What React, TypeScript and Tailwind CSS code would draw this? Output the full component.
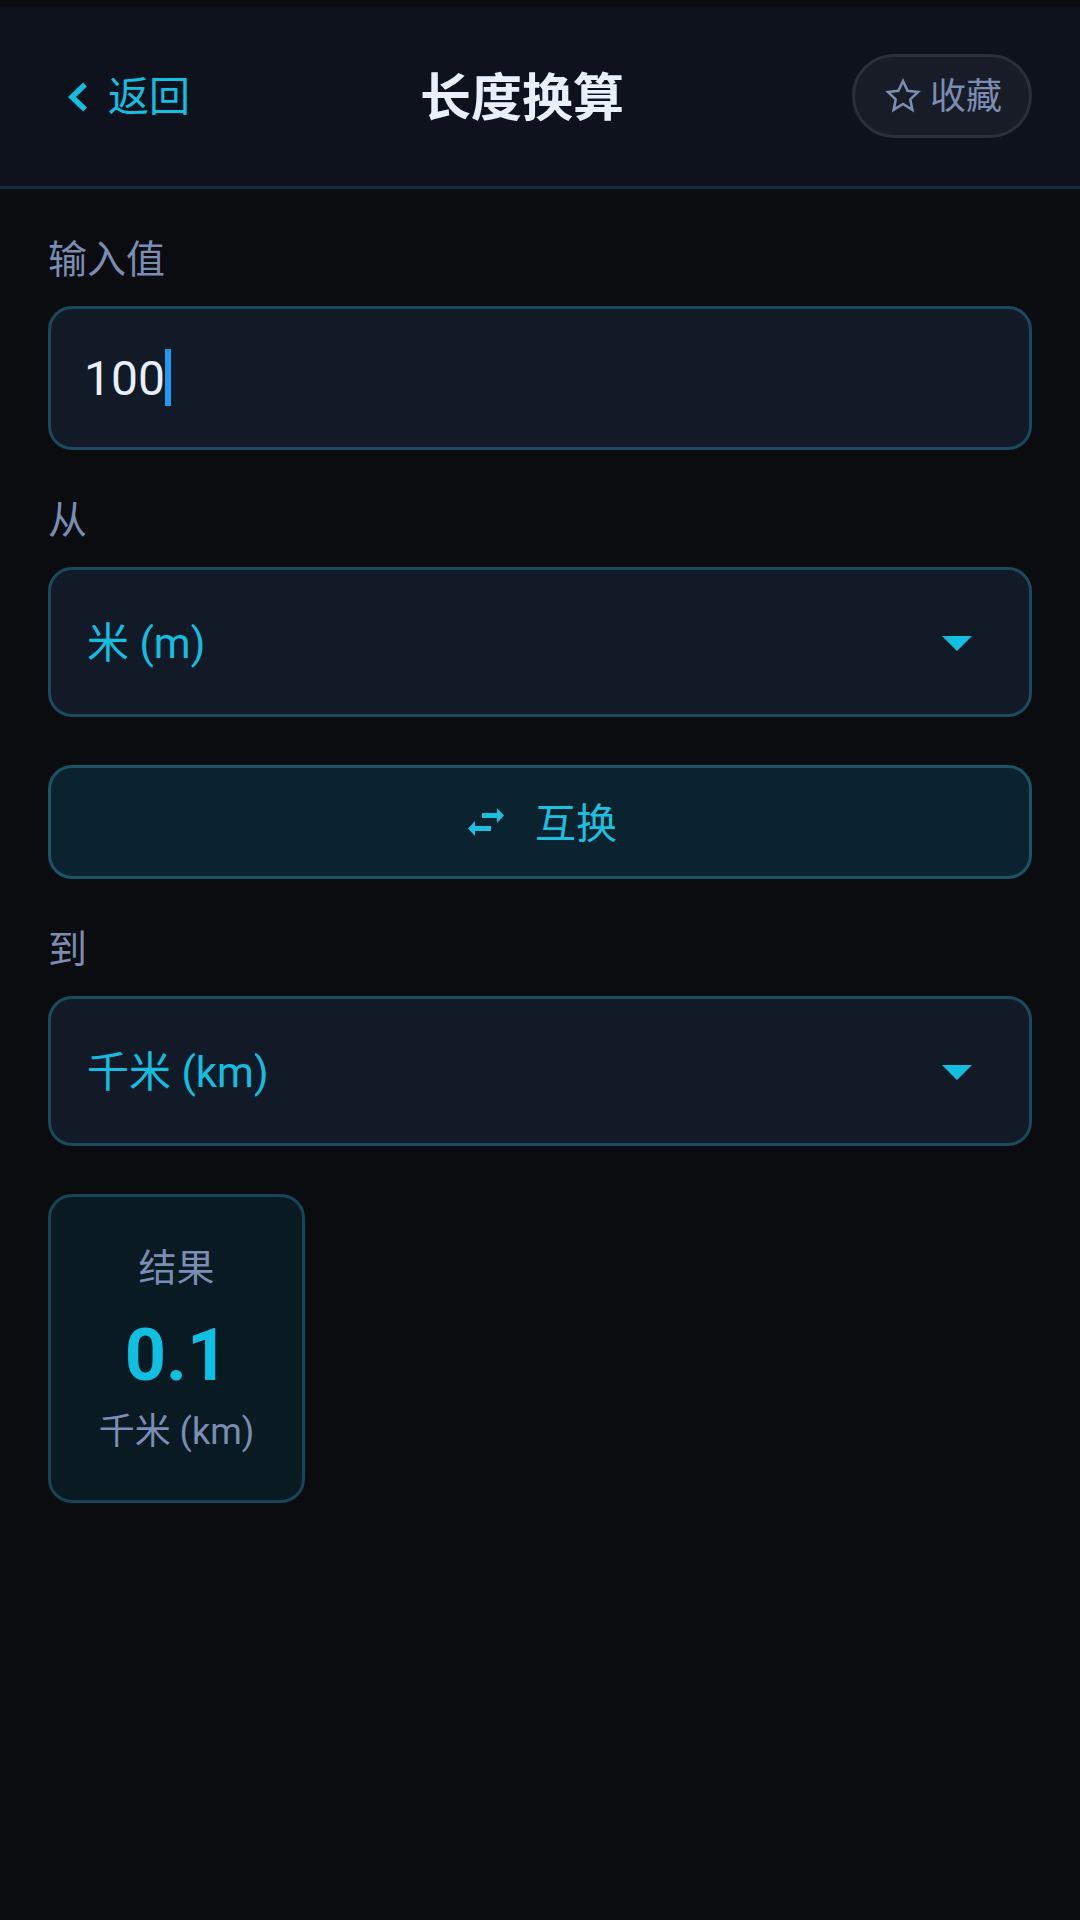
import React from "react";

function Label({ children }: { children: React.ReactNode }) {
  return <div className="mb-[22px] mt-[47px] text-[39px] leading-[48px] text-[#7b8db3]">{children}</div>;
}

function Select({ value }: { value: string }) {
  return (
    <div className="flex h-[150px] items-center justify-between rounded-[24px] border-[3px] border-[#1a4a5c] bg-[#131a27] pl-[36px] pr-[57px]">
      <span className="pt-[4px] text-[42px] leading-[56px] text-[#12bfe0]">{value}</span>
      <svg width="30" height="15" viewBox="0 0 30 15" className="mt-[2px] shrink-0">
        <path d="M0 0H30L15 15Z" fill="#12bfe0" />
      </svg>
    </div>
  );
}

export default function App() {
  return (
    <div className="flex h-[1920px] w-[1080px] flex-col bg-[#0a0c10] font-['Roboto','Noto_Sans_CJK_SC',sans-serif]">
      <div className="h-[6px] shrink-0 bg-[#0a0c10]" />
      <header className="flex h-[183px] shrink-0 items-center justify-between border-b-[3px] border-[#152c3a] bg-[#0d121c] px-[48px]">
        <div className="flex w-[144px] items-center pl-[19px]">
          <svg width="21" height="30" viewBox="0 0 21 30" className="mt-[1px] shrink-0">
            <path d="M18 2.5L5 15L18 27.5" fill="none" stroke="#12bfe0" strokeWidth="5.5" />
          </svg>
          <span className="ml-[20px] shrink-0 pt-[2px] text-[41px] leading-[56px] text-[#12bfe0]">返回</span>
        </div>
        <h1 className="pt-[5px] text-[51px] font-bold leading-[68px] text-[#e8f0fe]">长度换算</h1>
        <div className="flex h-[84px] w-[180px] items-center justify-center gap-[8px] rounded-full border-[3px] border-[#2a2f3b] bg-[#181c27] pl-[2px]">
          <svg width="38" height="38" viewBox="0 0 24 24" className="shrink-0">
            <path
              d="M12 2.5l2.9 6.2 6.6.8-4.9 4.6 1.3 6.7L12 17l-5.9 3.8 1.3-6.7L2.5 9.5l6.6-.8z"
              fill="none"
              stroke="#7b8db3"
              strokeWidth="1.6"
            />
          </svg>
          <span className="pt-[2px] text-[36px] leading-[48px] text-[#7b8db3]">收藏</span>
        </div>
      </header>

      <main className="flex flex-col px-[48px]">
        <Label>输入值</Label>
        <div className="flex h-[144px] items-center rounded-[24px] border-[3px] border-[#1a4a5c] bg-[#131a27] pl-[33px]">
          <span className="pt-[2px] text-[48px] leading-[64px] text-[#e8f0fe]">100</span>
          <span className="-mt-[2px] h-[57px] w-[6px] bg-[#2196f3]" />
        </div>

        <Label>从</Label>
        <Select value="米 (m)" />

        <div className="mt-[48px] flex h-[114px] items-center justify-center rounded-[24px] border-[3px] border-[#1a5566] bg-[#0b232e] pl-[5px]">
          <svg width="36" height="28" viewBox="0 0 36 28" className="shrink-0">
            <path d="M14 5H29V0L36 7.5L29 15V10H14Z" fill="#1cc0de" />
            <path d="M23 18H7V13L0 20.5L7 28V23H23Z" fill="#1cc0de" />
          </svg>
          <span className="ml-[31px] pt-[4px] text-[41px] leading-[56px] text-[#1cc0de]">互换</span>
        </div>

        <Label>到</Label>
        <Select value="千米 (km)" />

        <div className="mt-[48px] flex h-[309px] w-[257px] flex-col items-center rounded-[24px] border-[3px] border-[#154656] bg-[#0a1a22] pt-[47px]">
          <span className="text-[38px] leading-[48px] text-[#7b8db3]">结果</span>
          <span className="mt-[22px] text-[72px] font-bold leading-[84px] text-[#0fc0e2]">0.1</span>
          <span className="mt-[10px] text-[36px] leading-[48px] text-[#7b8db3]">千米 (km)</span>
        </div>
      </main>
    </div>
  );
}
